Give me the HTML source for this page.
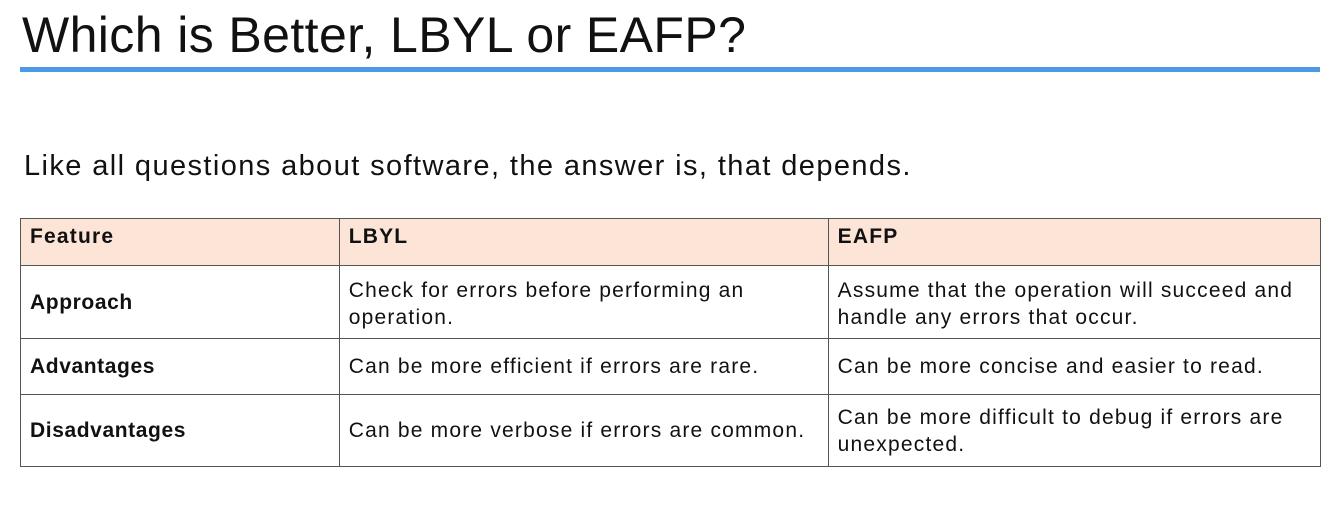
<!DOCTYPE html>
<html><head><meta charset="utf-8"><style>
body{margin:0;width:1338px;height:510px;background:#fff;font-family:"Liberation Sans",sans-serif;color:#111;position:relative;overflow:hidden}
h1{position:absolute;left:22px;top:5px;margin:0;font-weight:normal;font-size:50px;line-height:60px;letter-spacing:0.4px}
.bar{position:absolute;left:20px;top:67px;width:1300px;height:5px;background:#4a9ae6}
.sub{position:absolute;left:24px;top:148px;font-size:29px;line-height:36px;letter-spacing:1.4px}
table{position:absolute;left:20px;top:218px;border-collapse:collapse;width:1301px;font-size:21px;letter-spacing:1.2px}
td,th{border:1.5px solid #555;padding:0 9px;text-align:left;vertical-align:middle;line-height:27px}
th{background:#fce4d6;font-weight:bold;height:42px;vertical-align:top;padding-top:4px}
td.f{font-weight:bold;letter-spacing:0.6px}
</style></head><body>
<h1>Which is Better, LBYL or EAFP?</h1>
<div class="bar"></div>
<div class="sub">Like all questions about software, the answer is, that depends.</div>
<table>
<colgroup><col style="width:319px"><col style="width:489px"><col style="width:493px"></colgroup>
<tr><th>Feature</th><th>LBYL</th><th>EAFP</th></tr>
<tr style="height:73px"><td class="f">Approach</td><td style="padding-top:3px">Check for errors before performing an<br>operation.</td><td style="padding-top:3px">Assume that the operation will succeed and<br>handle any errors that occur.</td></tr>
<tr style="height:56px"><td class="f">Advantages</td><td>Can be more efficient if errors are rare.</td><td>Can be more concise and easier to read.</td></tr>
<tr style="height:72px"><td class="f">Disadvantages</td><td style="white-space:nowrap">Can be more verbose if errors are common.</td><td>Can be more difficult to debug if errors are<br>unexpected.</td></tr>
</table>
</body></html>
